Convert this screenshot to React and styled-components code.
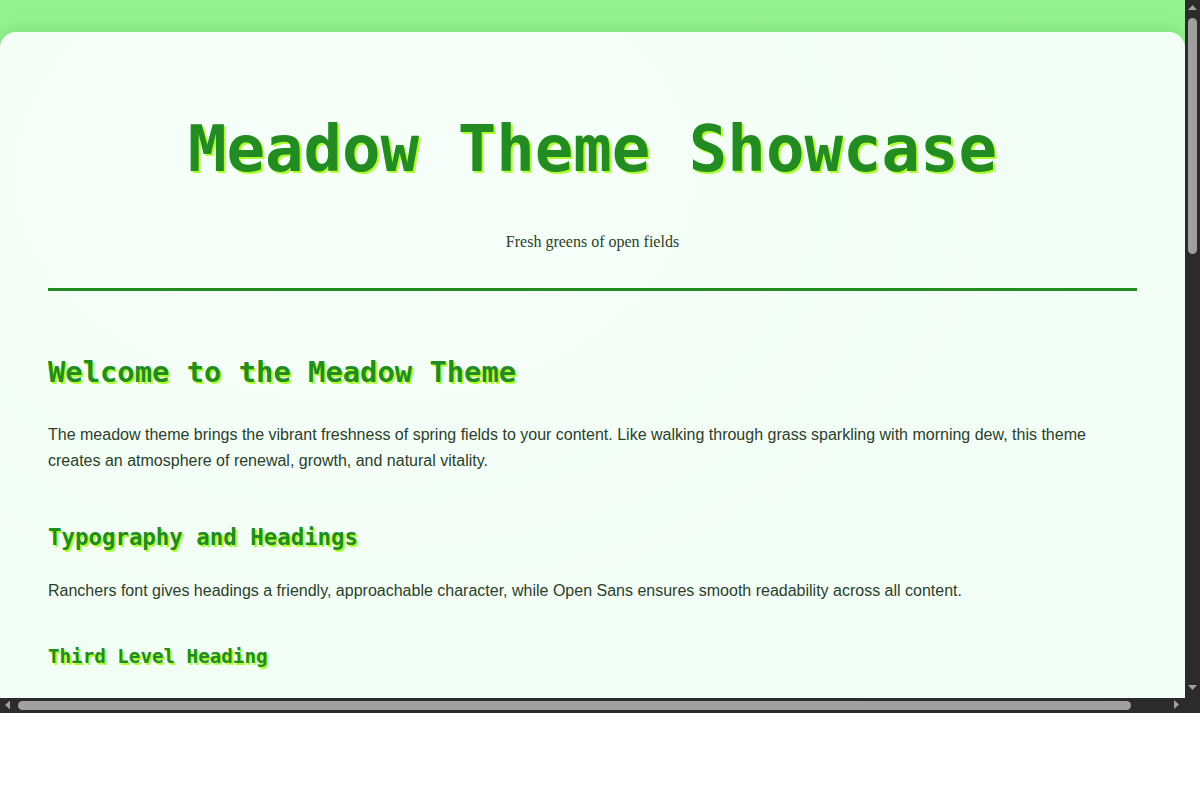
import React from "react";
import styled, { createGlobalStyle } from "styled-components";

const Global = createGlobalStyle`
  html, body { margin: 0; padding: 0; background: #ffffff; }
  #root { width: 1200px; }
`;

const BAR = "#2b2b2b";
const KNOB = "#a0a0a0";

/* Browser-like window: content pane plus drawn scrollbars */
const Window = styled.div`
  width: 1200px;
  height: 713px;
  display: grid;
  grid-template-columns: 1185px 15px;
  grid-template-rows: 698px 15px;
  background: ${BAR};
`;

const Pane = styled.div`
  overflow: hidden;
  background: #ffffff;
`;

const VBar = styled.div`
  display: flex;
  flex-direction: column;
  background: ${BAR};
`;

const HBar = styled.div`
  display: flex;
  flex-direction: row;
  background: ${BAR};
`;

const Corner = styled.div`
  background: ${BAR};
`;

const Thumb = styled.div`
  flex: 0 0 auto;
  background: ${KNOB};
  border-radius: 5px;
  width: ${(p) => (p.$vertical ? "9px" : `${p.$len}px`)};
  height: ${(p) => (p.$vertical ? `${p.$len}px` : "9px")};
  margin: 3px;
`;

const Spacer = styled.div`
  flex: 1;
`;

const ArrowBox = styled.svg`
  flex: 0 0 15px;
  width: 15px;
  height: 15px;
  display: block;
`;

const Arrow = ({ points }) => (
  <ArrowBox viewBox="0 0 15 15">
    <polygon points={points} fill={KNOB} />
  </ArrowBox>
);

const Meadow = styled.div`
  width: 1185px;
  padding: 32px 0 40px;
  background: linear-gradient(180deg, #95f291 0%, #8fea8c 100%);
  box-sizing: border-box;
`;

const Card = styled.main`
  background: radial-gradient(ellipse at 30% 20%, #f6fff9 0%, #f2fdf6 60%, #f4fef8 100%);
  border-radius: 16px;
  padding: 0 48px 48px;
  box-shadow: 0 -2px 16px rgba(34, 139, 34, 0.18);
  color: #2b3f2b;
  font-family: "Liberation Sans", Arial, sans-serif;
`;

const Header = styled.header`
  text-align: center;
  padding: 79px 0 37px;
  border-bottom: 3px solid #228b22;
`;

const Heading = styled.h1`
  font-family: "DejaVu Sans Mono", monospace;
  font-weight: 700;
  color: #228b22;
  text-shadow: 2px 2px 0 #adff2f;
  margin: ${(p) => p.$m || "0"};
  font-size: ${(p) => p.$size};
  line-height: 1.2;
`;

const Tagline = styled.p`
  font-family: "Liberation Serif", "Times New Roman", serif;
  font-size: 16px;
  color: #2b3f2b;
  margin: 45px 0 0;
`;

const Section = styled.section`
  padding-top: 64px;
`;

const Para = styled.p`
  font-size: 16px;
  line-height: 26px;
  margin: ${(p) => p.$m || "0"};
`;

export default function App() {
  return (
    <>
      <Global />
      <Window>
        <Pane>
          <Meadow>
            <Card>
              <Header>
                <Heading $size="64px">Meadow Theme Showcase</Heading>
                <Tagline>Fresh greens of open fields</Tagline>
              </Header>
              <Section>
                <Heading as="h2" $size="28.8px" $m="0 0 33px">
                  Welcome to the Meadow Theme
                </Heading>
                <Para>
                  The meadow theme brings the vibrant freshness of spring fields to your content. Like walking
                  through grass sparkling with morning dew, this theme creates an atmosphere of renewal, growth,
                  and natural vitality.
                </Para>
                <Heading as="h3" $size="22.4px" $m="50px 0 27px">
                  Typography and Headings
                </Heading>
                <Para>
                  Ranchers font gives headings a friendly, approachable character, while Open Sans ensures smooth
                  readability across all content.
                </Para>
                <Heading as="h4" $size="19.2px" $m="41px 0 20px">
                  Third Level Heading
                </Heading>
              </Section>
            </Card>
          </Meadow>
        </Pane>
        <VBar>
          <Arrow points="3,10 7.5,5 12,10" />
          <Thumb $vertical $len={236} />
          <Spacer />
          <Arrow points="3,2 12,2 7.5,7" />
        </VBar>
        <HBar>
          <Arrow points="10,2.5 5,7 10,11.5" />
          <Thumb $len={1113} />
          <Spacer />
          <Arrow points="4,2 9,6.5 4,11" />
        </HBar>
        <Corner />
      </Window>
    </>
  );
}
